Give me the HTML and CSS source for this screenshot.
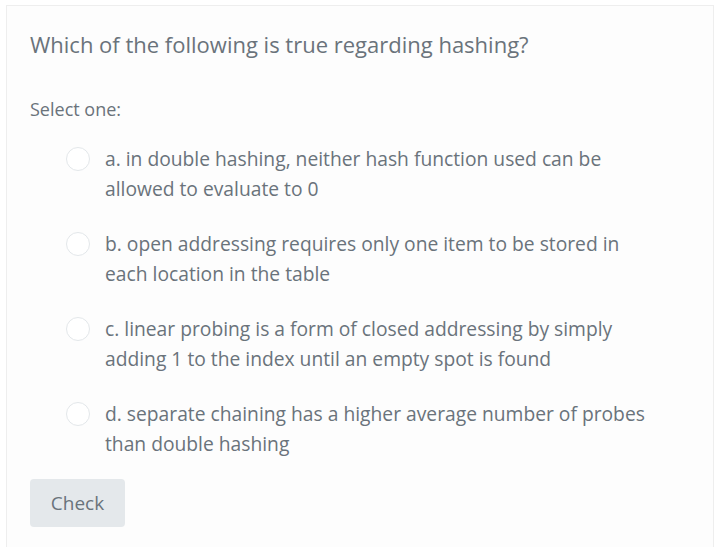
FILE: index.html
```html
<!DOCTYPE html>
<html>
<head>
<meta charset="utf-8">
<link rel="stylesheet" href="styles.css">
</head>
<body>
<div class="card">
  <h2 class="question">Which of the following is true regarding hashing?</h2>
  <div class="prompt">Select one:</div>
  <div class="answers">
    <label class="option"><span class="radio"></span><span class="text">a. in double hashing, neither hash function used can be allowed to evaluate to 0</span></label>
    <label class="option"><span class="radio"></span><span class="text">b. open addressing requires only one item to be stored in each location in the table</span></label>
    <label class="option"><span class="radio"></span><span class="text">c. linear probing is a form of closed addressing by simply adding 1 to the index until an empty spot is found</span></label>
    <label class="option"><span class="radio"></span><span class="text">d. separate chaining has a higher average number of probes than double hashing</span></label>
  </div>
  <button class="check">Check</button>
</div>
</body>
</html>
```
FILE: styles.css
```css
html, body {
  margin: 0;
  padding: 0;
  background: #ffffff;
}
body {
  padding: 5px 10px 0 6px;
  font-family: "Open Sans", "Liberation Sans", sans-serif;
  color: #6a737b;
}
.card {
  border: 1px solid #eeeeee;
  border-bottom: none;
  background: #fdfdfd;
  padding: 23px 0 20px 23px;
  min-height: 540px;
  box-sizing: border-box;
}
.question {
  margin: 0;
  font-weight: 400;
  font-size: 22px;
  line-height: 30px;
  color: #6a737b;
}
.prompt {
  margin-top: 38px;
  font-size: 18px;
  line-height: 24px;
}
.answers {
  margin-top: 23px;
  padding-left: 36px;
  display: flex;
  flex-direction: column;
  gap: 25px;
}
.option {
  display: flex;
  align-items: flex-start;
  gap: 15px;
}
.radio {
  flex: none;
  width: 22px;
  height: 22px;
  margin-top: 3px;
  border: 1px solid #e3e7ea;
  border-radius: 50%;
  background: #fff;
}
.text {
  font-size: 19.25px;
  line-height: 30px;
  width: 550px;
}
.check {
  margin-top: 20px;
  font-family: inherit;
  font-size: 19px;
  color: #6a737b;
  background: #e4e8eb;
  border: none;
  border-radius: 4px;
  width: 95px;
  height: 48px;
  padding: 0;
}
```
